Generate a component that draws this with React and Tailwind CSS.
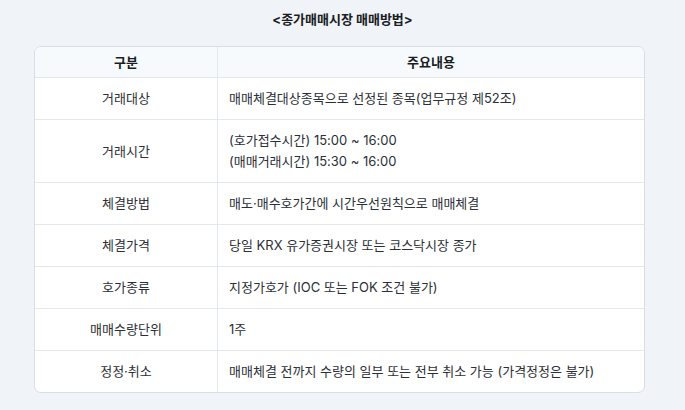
const rows = [
  ["거래대상", ["매매체결대상종목으로 선정된 종목(업무규정 제52조)"]],
  ["거래시간", ["(호가접수시간) 15:00 ~ 16:00", "(매매거래시간) 15:30 ~ 16:00"]],
  ["체결방법", ["매도·매수호가간에 시간우선원칙으로 매매체결"]],
  ["체결가격", ["당일 KRX 유가증권시장 또는 코스닥시장 종가"]],
  ["호가종류", ["지정가호가 (IOC 또는 FOK 조건 불가)"]],
  ["매매수량단위", ["1주"]],
  ["정정·취소", ["매매체결 전까지 수량의 일부 또는 전부 취소 가능 (가격정정은 불가)"]],
]

export default function App() {
  return (
    <div
      className="w-[685px] h-[410px] bg-[#f0f3f8] text-[#2b2f36] pt-[10px]"
      style={{ fontFamily: "Inter, 'Noto Sans CJK KR', sans-serif" }}
    >
      <h2 className="text-center text-[13px] font-bold leading-[18px] text-[#1a1d21]">
        &lt;종가매매시장 매매방법&gt;
      </h2>
      <div className="mx-[34px] mt-[18px] w-[611px] bg-white border border-[#d8dee6] rounded-[7px] overflow-hidden">
        <div className="flex bg-[#f7fafd] border-b border-[#e3e8ee] text-[13px] font-bold text-[#1a1d21]">
          <div className="w-[183px] text-center leading-[20px] py-[5px] border-r border-[#e3e8ee]">구분</div>
          <div className="flex-1 text-center leading-[20px] py-[5px]">주요내용</div>
        </div>
        {rows.map(([label, lines], i) => (
          <div
            key={label}
            className={"flex text-[13px] " + (i < rows.length - 1 ? "border-b border-[#e3e8ee]" : "")}
          >
            <div className="w-[183px] flex items-center justify-center border-r border-[#e3e8ee] leading-[21px]">
              {label}
            </div>
            <div className="flex-1 pl-[11px] py-[10px] leading-[21px]">
              {lines.map((l) => (
                <div key={l}>{l}</div>
              ))}
            </div>
          </div>
        ))}
      </div>
    </div>
  )
}
